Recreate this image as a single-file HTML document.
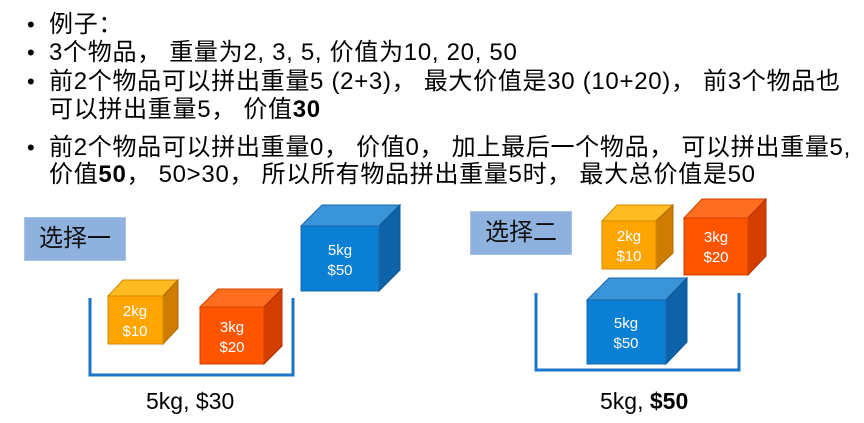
<!DOCTYPE html>
<html><head><meta charset="utf-8"><style>
body{margin:0;width:864px;height:423px;overflow:hidden;background:#fff;font-family:"Liberation Sans","Noto Sans CJK SC",sans-serif;color:#000;position:relative}
.l{position:absolute;left:49px;font-size:24px;line-height:28px;white-space:nowrap;letter-spacing:0.7px}
.b{position:absolute;left:27px;font-size:22px;line-height:28px}
.lab{position:absolute;background:#8eb1de;border:1px solid #a9c3e6;font-size:24px;line-height:42px;box-sizing:border-box;height:44px;width:102px;text-align:center;color:#111}
.cap{position:absolute;font-size:23px;line-height:24px}
</style></head><body>
<div class="b" style="top:11px">•</div><div class="l" style="top:11px">例子：</div>
<div class="b" style="top:39px">•</div><div class="l" style="top:39px">3个物品， 重量为2, 3, 5, 价值为10, 20, 50</div>
<div class="b" style="top:68px">•</div><div class="l" style="top:68px">前2个物品可以拼出重量5 (2+3)， 最大价值是30 (10+20)， 前3个物品也</div>
<div class="l" style="top:96px">可以拼出重量5， 价值<b>30</b></div>
<div class="b" style="top:134px">•</div><div class="l" style="top:134px">前2个物品可以拼出重量0， 价值0， 加上最后一个物品， 可以拼出重量5,</div>
<div class="l" style="top:161px">价值<b>50</b>， 50&gt;30， 所以所有物品拼出重量5时， 最大总价值是50</div>
<div class="lab" style="left:24px;top:217px">选择一</div>
<div class="lab" style="left:470px;top:211px">选择二</div>
<svg width="864" height="423" style="position:absolute;left:0;top:0" font-family="Liberation Sans,sans-serif">
<g fill="none" stroke="#1b74c6" stroke-width="3"><path d="M90 298V375H293V298"/><path d="M536 293V370H739V293"/></g>
<g>
<polygon points="108,296 123,280 178,280 163,296" fill="#ffbb22" stroke="#d08a00"/>
<polygon points="163,296 178,280 178,328 163,344" fill="#cf7d00" stroke="#b06800"/>
<rect x="108" y="296" width="55" height="48" fill="#ffa500" stroke="#d08a00"/>
<text x="135" y="316" fill="#fff" font-size="15" text-anchor="middle">2kg</text><text x="135" y="336" fill="#fff" font-size="15" text-anchor="middle">$10</text>
</g>
<g>
<polygon points="200,307 218,289 282,289 264,307" fill="#ff6e1e" stroke="#d04000"/>
<polygon points="264,307 282,289 282,346 264,364" fill="#d43f00" stroke="#b03000"/>
<rect x="200" y="307" width="64" height="57" fill="#ff5500" stroke="#d04000"/>
<text x="232" y="332" fill="#fff" font-size="15" text-anchor="middle">3kg</text><text x="232" y="352" fill="#fff" font-size="15" text-anchor="middle">$20</text>
</g>
<g>
<polygon points="301,226 322,205 400,205 379,226" fill="#3994d8" stroke="#1a66aa"/>
<polygon points="379,226 400,205 400,270 379,291" fill="#0e62a8" stroke="#0c5595"/>
<rect x="301" y="226" width="78" height="65" fill="#0a7fd3" stroke="#1a66aa"/>
<text x="340" y="255" fill="#fff" font-size="15" text-anchor="middle">5kg</text><text x="340" y="275" fill="#fff" font-size="15" text-anchor="middle">$50</text>
</g>
<g>
<polygon points="602,221 617,205 673,205 656,221" fill="#ffbb22" stroke="#d08a00"/>
<polygon points="656,221 673,205 673,253 656,269" fill="#cf7d00" stroke="#b06800"/>
<rect x="602" y="221" width="54" height="48" fill="#ffa500" stroke="#d08a00"/>
<text x="629" y="241" fill="#fff" font-size="15" text-anchor="middle">2kg</text><text x="629" y="261" fill="#fff" font-size="15" text-anchor="middle">$10</text>
</g>
<g>
<polygon points="684,218 702,199 766,199 748,218" fill="#ff6e1e" stroke="#d04000"/>
<polygon points="748,218 766,199 766,256 748,275" fill="#d43f00" stroke="#b03000"/>
<rect x="684" y="218" width="64" height="57" fill="#ff5500" stroke="#d04000"/>
<text x="716" y="242" fill="#fff" font-size="15" text-anchor="middle">3kg</text><text x="716" y="262" fill="#fff" font-size="15" text-anchor="middle">$20</text>
</g>
<g>
<polygon points="587,300 609,278 687,278 666,300" fill="#3994d8" stroke="#1a66aa"/>
<polygon points="666,300 687,278 687,342 666,364" fill="#0e62a8" stroke="#0c5595"/>
<rect x="587" y="300" width="79" height="64" fill="#0a7fd3" stroke="#1a66aa"/>
<text x="626" y="328" fill="#fff" font-size="15" text-anchor="middle">5kg</text><text x="626" y="348" fill="#fff" font-size="15" text-anchor="middle">$50</text>
</g>
</svg>
<div class="cap" style="left:146px;top:389px">5kg, $30</div>
<div class="cap" style="left:600px;top:389px">5kg, <b>$50</b></div>
</body></html>
